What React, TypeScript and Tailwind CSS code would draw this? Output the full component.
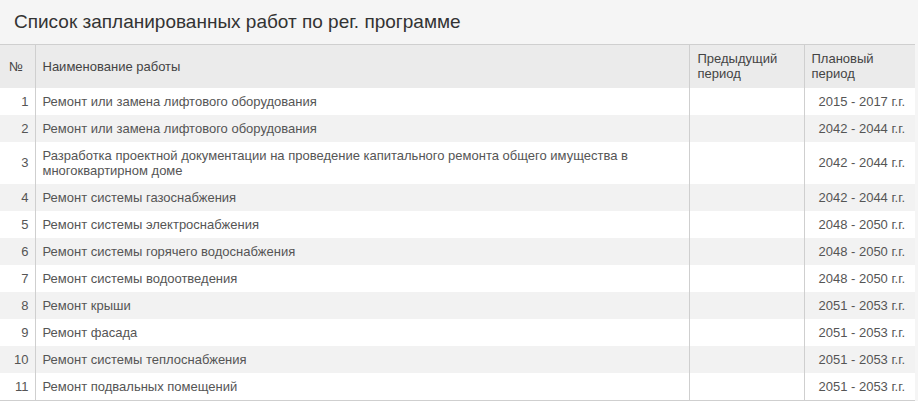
import React from 'react'

type Work = {
  n: number
  name: string
  prev: string
  plan: string
}

const works: Work[] = [
  { n: 1, name: 'Ремонт или замена лифтового оборудования', prev: '', plan: '2015 - 2017 г.г.' },
  { n: 2, name: 'Ремонт или замена лифтового оборудования', prev: '', plan: '2042 - 2044 г.г.' },
  {
    n: 3,
    name: 'Разработка проектной документации на проведение капитального ремонта общего имущества в многоквартирном доме',
    prev: '',
    plan: '2042 - 2044 г.г.',
  },
  { n: 4, name: 'Ремонт системы газоснабжения', prev: '', plan: '2042 - 2044 г.г.' },
  { n: 5, name: 'Ремонт системы электроснабжения', prev: '', plan: '2048 - 2050 г.г.' },
  { n: 6, name: 'Ремонт системы горячего водоснабжения', prev: '', plan: '2048 - 2050 г.г.' },
  { n: 7, name: 'Ремонт системы водоотведения', prev: '', plan: '2048 - 2050 г.г.' },
  { n: 8, name: 'Ремонт крыши', prev: '', plan: '2051 - 2053 г.г.' },
  { n: 9, name: 'Ремонт фасада', prev: '', plan: '2051 - 2053 г.г.' },
  { n: 10, name: 'Ремонт системы теплоснабжения', prev: '', plan: '2051 - 2053 г.г.' },
  { n: 11, name: 'Ремонт подвальных помещений', prev: '', plan: '2051 - 2053 г.г.' },
]

export default function App() {
  return (
    <div className="w-[918px] h-[401px] overflow-hidden bg-[#f5f5f5] font-['Liberation_Sans'] text-[#555]">
      <h1 className="h-[44px] pl-[14px] pt-[11px] text-[19px] leading-[22px] text-[#333]">
        Список запланированных работ по рег. программе
      </h1>
      <table className="w-[915px] table-fixed border-collapse text-[13px] leading-[15px]">
        <colgroup>
          <col className="w-[35px]" />
          <col className="w-[654px]" />
          <col className="w-[115px]" />
          <col />
        </colgroup>
        <thead>
          <tr className="h-[43px] bg-[#ebebeb] border-t border-[#cfcfcf] text-[#444]">
            <th className="px-[9px] text-left font-normal border-r border-[#cfcfcf]">№</th>
            <th className="px-[7px] text-left font-normal border-r border-[#cfcfcf]">Наименование работы</th>
            <th className="px-[8px] text-left font-normal border-r border-[#cfcfcf]">
              Предыдущий
              <br />
              период
            </th>
            <th className="px-[7px] text-left font-normal">
              Плановый
              <br />
              период
            </th>
          </tr>
        </thead>
        <tbody className="border-b border-[#cfcfcf]">
          {works.map((w, i) => (
            <tr key={w.n} className={i % 2 === 0 ? 'bg-white' : 'bg-[#f2f2f2]'}>
              <td className="py-[6px] pr-[6px] text-right border-r border-[#cfcfcf]">{w.n}</td>
              <td className="py-[6px] px-[7px] border-r border-[#cfcfcf]">{w.name}</td>
              <td className="py-[6px] px-[8px] border-r border-[#cfcfcf]">{w.prev}</td>
              <td className="py-[6px] pr-[10px] text-right">{w.plan}</td>
            </tr>
          ))}
        </tbody>
      </table>
    </div>
  )
}
